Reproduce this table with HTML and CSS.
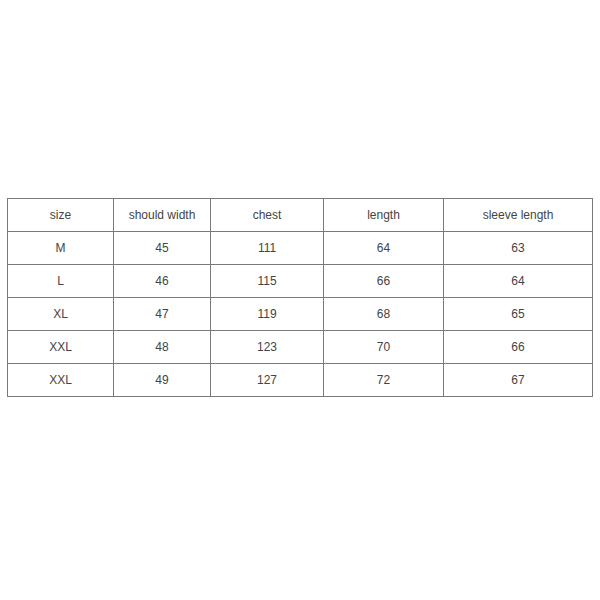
FILE: index.html
```html
<!DOCTYPE html>
<html>
<head>
<meta charset="utf-8">
<link rel="stylesheet" href="styles.css">
</head>
<body>
<div class="page">
  <div class="table">
    <div class="cell">size</div><div class="cell">should width</div><div class="cell">chest</div><div class="cell">length</div><div class="cell">sleeve length</div>
    <div class="cell">M</div><div class="cell">45</div><div class="cell">111</div><div class="cell">64</div><div class="cell">63</div>
    <div class="cell">L</div><div class="cell">46</div><div class="cell">115</div><div class="cell">66</div><div class="cell">64</div>
    <div class="cell">XL</div><div class="cell">47</div><div class="cell">119</div><div class="cell">68</div><div class="cell">65</div>
    <div class="cell">XXL</div><div class="cell">48</div><div class="cell">123</div><div class="cell">70</div><div class="cell">66</div>
    <div class="cell">XXL</div><div class="cell">49</div><div class="cell">127</div><div class="cell">72</div><div class="cell">67</div>
  </div>
</div>
</body>
</html>
```
FILE: styles.css
```css
* { box-sizing: border-box; }
html, body { margin: 0; padding: 0; background: #fff; }
.page {
  width: 600px;
  height: 600px;
  padding: 198px 0 0 7px;
}
.table {
  display: grid;
  grid-template-columns: 106px 97px 113px 120px 149px;
  grid-auto-rows: 33px;
  width: 586px;
  border-top: 1px solid #7a7a7a;
  border-left: 1px solid #7a7a7a;
}
.cell {
  display: flex;
  align-items: center;
  justify-content: center;
  border-right: 1px solid #7a7a7a;
  border-bottom: 1px solid #7a7a7a;
  font-family: "Liberation Sans", Arial, sans-serif;
  font-size: 12px;
  color: #444;
}
```
